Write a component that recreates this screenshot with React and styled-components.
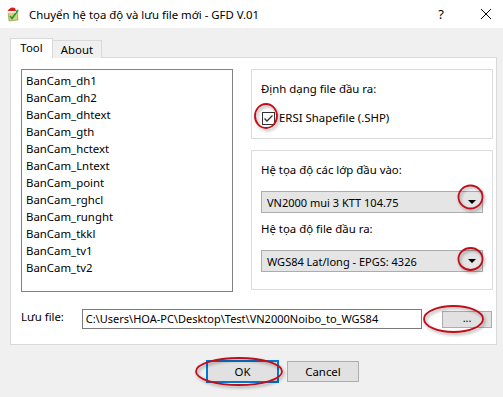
import React from "react";
import styled, { createGlobalStyle } from "styled-components";

const GlobalStyle = createGlobalStyle`
  html, body {
    margin: 0;
    padding: 0;
    background: #f0f0f0;
  }
  * {
    box-sizing: border-box;
  }
`;

const Window = styled.div`
  position: relative;
  width: 503px;
  height: 397px;
  background: #f0f0f0;
  font-family: "Noto Sans", "Open Sans", sans-serif;
  font-size: 11.4px;
  color: #000;
  overflow: hidden;
`;

const TitleBar = styled.div`
  height: 28px;
  background: #fff;
  display: flex;
  align-items: center;
  padding-left: 6px;
`;

const Title = styled.span`
  margin-left: 9px;
  font-size: 11.4px;
  flex: 1;
`;

const TitleButton = styled.div`
  width: ${(p) => p.w}px;
  margin-left: ${(p) => p.ml || 0}px;
  display: flex;
  justify-content: center;
  align-items: center;
  font-size: 13px;
`;

const Body = styled.div`
  padding: 10px 6px 0 10px;
`;

const TabRow = styled.div`
  display: flex;
  align-items: flex-end;
  height: 20px;
`;

const Tab = styled.div`
  position: relative;
  z-index: 1;
  height: ${(p) => (p.active ? 20 : 18)}px;
  width: ${(p) => p.w}px;
  background: ${(p) => (p.active ? "#fff" : "#f0f0f0")};
  border: 1px solid #d9d9d9;
  border-bottom: none;
  border-left: ${(p) => (p.first ? "1px solid #d9d9d9" : "none")};
  display: flex;
  justify-content: center;
  padding-top: 1px;
  line-height: 16px;
`;

const Panel = styled.div`
  margin-top: -1px;
  height: 288px;
  background: #fff;
  border: 1px solid #d9d9d9;
  padding: 11px 4px 0 10px;
  display: flex;
  flex-direction: column;
`;

const TopGrid = styled.div`
  display: grid;
  grid-template-columns: 212px 242px;
  column-gap: 18px;
`;

const ListBox = styled.div`
  height: 223px;
  border: 1px solid #828282;
  padding: 2px 0 0 4px;
`;

const ListItem = styled.div`
  line-height: 17px;
  height: 17px;
`;

const RightCol = styled.div`
  display: flex;
  flex-direction: column;
  gap: 11px;
`;

const Group = styled.div`
  height: ${(p) => p.h}px;
  border: 1px solid #dcdcdc;
  padding: ${(p) => p.pt}px 9px 0 9px;
  display: flex;
  flex-direction: column;
`;

const Label = styled.div`
  line-height: 16px;
  margin-bottom: ${(p) => p.mb || 0}px;
`;

const CheckRow = styled.div`
  display: flex;
  align-items: center;
  gap: 4px;
  padding-left: 1px;
  line-height: 16px;
`;

const CheckBox = styled.div`
  width: 13px;
  height: 13px;
  border: 1px solid #333;
  background: #fff;
  display: flex;
  align-items: center;
  justify-content: center;
`;

const Combo = styled.div`
  height: 22px;
  background: #e5e5e5;
  border: 1px solid #acacac;
  display: flex;
  align-items: center;
  padding: 0 6px 0 5px;
  margin-bottom: ${(p) => p.mb || 0}px;
  font-size: 11px;
`;

const ComboText = styled.span`
  flex: 1;
`;

const Arrow = styled.div`
  width: 0;
  height: 0;
  border-left: 4px solid transparent;
  border-right: 4px solid transparent;
  border-top: 4px solid #000;
`;

const SaveRow = styled.div`
  display: flex;
  align-items: center;
  margin-top: 17px;
`;

const SaveLabel = styled.div`
  width: 61px;
  margin-top: -6px;
`;

const PathField = styled.div`
  width: 342px;
  height: 20px;
  border: 1px solid #7a7a7a;
  background: #fff;
  line-height: 18px;
  padding-left: 3px;
  font-size: 11px;
`;

const SmallButton = styled.div`
  margin-left: 20px;
  width: 50px;
  height: 17px;
  background: #e1e1e1;
  border: 1px solid #adadad;
  display: flex;
  justify-content: center;
  align-items: center;
  font-size: 11px;
  padding-bottom: 3px;
`;

const ButtonRow = styled.div`
  display: flex;
  gap: 8px;
  padding-top: 15px;
  padding-left: 196px;
`;

const Button = styled.div`
  width: ${(p) => (p.primary ? 73 : 72)}px;
  height: ${(p) => (p.primary ? 23 : 21)}px;
  margin-top: ${(p) => (p.primary ? 0 : 1)}px;
  background: #e1e1e1;
  border: ${(p) => (p.primary ? "2px solid #0078d7" : "1px solid #adadad")};
  display: flex;
  justify-content: center;
  align-items: center;
`;

const Overlay = styled.svg`
  position: absolute;
  left: 0;
  top: 0;
  pointer-events: none;
`;

const items = [
  "BanCam_dh1",
  "BanCam_dh2",
  "BanCam_dhtext",
  "BanCam_gth",
  "BanCam_hctext",
  "BanCam_Lntext",
  "BanCam_point",
  "BanCam_rghcl",
  "BanCam_runght",
  "BanCam_tkkl",
  "BanCam_tv1",
  "BanCam_tv2",
];

const marks = [
  { cx: 266, cy: 116, rx: 11, ry: 12 },
  { cx: 470.5, cy: 197, rx: 12, ry: 11.5 },
  { cx: 470.5, cy: 259, rx: 12, ry: 11 },
  { cx: 453.5, cy: 319, rx: 29.5, ry: 13 },
  { cx: 239, cy: 371.5, rx: 43, ry: 13.5 },
];

const AppIcon = () => (
  <svg width="14" height="16" viewBox="0 0 14 16">
    <path d="M2 5 L11 5 L12 14 L3 15 Z" fill="#d9d27a" stroke="#8a8a3a" strokeWidth="0.6" />
    <path d="M4 10 L6 12.5 L12 4" fill="none" stroke="#2e9b3a" strokeWidth="1.8" />
    <path d="M1 6 Q4 0 9 2 L10 5 L1 6 Z" fill="#d42020" />
    <circle cx="1.5" cy="6" r="1.3" fill="#fff" />
    <rect x="1" y="5" width="9" height="1.6" fill="#f2f2f2" />
  </svg>
);

export default function App() {
  return (
    <>
      <GlobalStyle />
      <Window>
        <TitleBar>
          <AppIcon />
          <Title>Chuyển hệ tọa độ và lưu file mới - GFD V.01</Title>
          <TitleButton w={20}>?</TitleButton>
          <TitleButton w={26} ml={22}>
            <svg width="12" height="12" viewBox="0 0 12 12">
              <path d="M1 1 L11 11 M11 1 L1 11" stroke="#000" strokeWidth="1" />
            </svg>
          </TitleButton>
          <div style={{ width: 4 }} />
        </TitleBar>
        <Body>
          <TabRow>
            <Tab active first w={43}>Tool</Tab>
            <Tab w={49}>About</Tab>
          </TabRow>
          <Panel>
            <TopGrid>
              <ListBox>
                {items.map((it) => (
                  <ListItem key={it}>{it}</ListItem>
                ))}
              </ListBox>
              <RightCol>
                <Group h={70} pt={11}>
                  <Label mb={13}>Định dạng file đầu ra:</Label>
                  <CheckRow>
                    <CheckBox>
                      <svg width="11" height="11" viewBox="0 0 11 11">
                        <path d="M1.5 5.5 L4 8 L9.5 2.5" fill="none" stroke="#333" strokeWidth="1.3" />
                      </svg>
                    </CheckBox>
                    ERSI Shapefile (.SHP)
                  </CheckRow>
                </Group>
                <Group h={140} pt={11}>
                  <Label mb={13}>Hệ tọa độ các lớp đầu vào:</Label>
                  <Combo mb={8}>
                    <ComboText>VN2000 mui 3 KTT 104.75</ComboText>
                    <Arrow />
                  </Combo>
                  <Label mb={13}>Hệ tọa độ file đầu ra:</Label>
                  <Combo>
                    <ComboText>WGS84 Lat/long - EPGS: 4326</ComboText>
                    <Arrow />
                  </Combo>
                </Group>
              </RightCol>
            </TopGrid>
            <SaveRow>
              <SaveLabel>Lưu file:</SaveLabel>
              <PathField>C:\Users\HOA-PC\Desktop\Test\VN2000Noibo_to_WGS84</PathField>
              <SmallButton>...</SmallButton>
            </SaveRow>
          </Panel>
          <ButtonRow>
            <Button primary>OK</Button>
            <Button>Cancel</Button>
          </ButtonRow>
        </Body>
        <Overlay width="503" height="397">
          <defs>
            <filter id="sh" x="-30%" y="-30%" width="160%" height="160%">
              <feDropShadow dx="1.5" dy="2" stdDeviation="1.5" floodColor="#000" floodOpacity="0.35" />
            </filter>
          </defs>
          {marks.map((m, i) => (
            <ellipse
              key={i}
              cx={m.cx}
              cy={m.cy}
              rx={m.rx}
              ry={m.ry}
              fill="none"
              stroke="#c0101a"
              strokeWidth="1.8"
              filter="url(#sh)"
            />
          ))}
        </Overlay>
      </Window>
    </>
  );
}
